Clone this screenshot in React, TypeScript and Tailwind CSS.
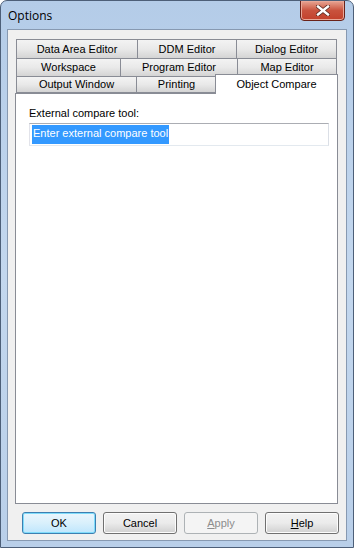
import React from "react";

const ui = { fontFamily: '"Liberation Sans", Arial, sans-serif' };

type Tab = { label: string; w: number };

const rows: Tab[][] = [
  [
    { label: "Data Area Editor", w: 122 },
    { label: "DDM Editor", w: 100 },
    { label: "Dialog Editor", w: 101 },
  ],
  [
    { label: "Workspace", w: 105 },
    { label: "Program Editor", w: 118 },
    { label: "Map Editor", w: 100 },
  ],
];

function TabButton({ tab, first, h }: { tab: Tab; first: boolean; h: string }) {
  return (
    <div
      className={`${h} ${first ? "" : "-ml-px"} flex items-center justify-center border border-[#898c95] bg-gradient-to-b from-[#f3f3f3] via-[#e9e9e9] to-[#d4d4d4] text-[11px] text-black`}
      style={{ width: tab.w }}
    >
      {tab.label}
    </div>
  );
}

function Button({
  children,
  variant = "normal",
}: {
  children: React.ReactNode;
  variant?: "normal" | "default" | "disabled";
}) {
  const cls =
    variant === "default"
      ? "border-[#3c7fb1] shadow-[inset_0_0_0_1px_#7fdcfb] bg-gradient-to-b from-[#eaf6fd] via-[#d9f0fc] to-[#bee6fd] text-black"
      : variant === "disabled"
      ? "border-[#adb2b5] bg-[#f4f4f4] text-[#8d8d8d]"
      : "border-[#707070] shadow-[inset_0_0_0_1px_#fcfcfc] bg-gradient-to-b from-[#f2f2f2] via-[#ebebeb] to-[#d0d0d0] text-black";
  return (
    <div
      className={`w-[74px] h-[22px] rounded-[3px] border flex items-center justify-center text-[11px] ${cls}`}
    >
      {children}
    </div>
  );
}

export default function App() {
  return (
    <div
      className="w-[354px] h-[548px] flex flex-col rounded-t-[7px] border border-[#4d5f78] bg-gradient-to-b from-[#b4cce8] via-[#c3d7ee] to-[#b9cfe9] overflow-hidden"
      style={ui}
    >
      {/* title bar */}
      <div className="h-[28px] flex items-start justify-between pl-[7px] pr-[8px]">
        <div
          className="mt-[6px] text-[12px] text-black"
          style={{ fontFamily: '"Open Sans", "Noto Sans", sans-serif' }}
        >
          Options
        </div>
        <div className="-mt-px w-[45px] h-[21px] rounded-b-[4px] border border-[#6a2219] bg-gradient-to-b from-[#e7a594] via-[#c9523d] to-[#c2402b] shadow-[inset_0_0_0_1px_#e9a898] flex items-center justify-center">
          <svg width="14" height="11" viewBox="0 0 14 11">
            <path
              d="M2 1.5 L12 9.5 M12 1.5 L2 9.5"
              stroke="#5a2a22"
              strokeWidth="4"
              strokeLinecap="square"
            />
            <path
              d="M2 1.5 L12 9.5 M12 1.5 L2 9.5"
              stroke="#ffffff"
              strokeWidth="2.4"
              strokeLinecap="square"
            />
          </svg>
        </div>
      </div>

      {/* client area */}
      <div className="mx-[6px] h-[512px] border border-[#8799b1] bg-[#f0f0f0] flex flex-col pt-[9px] pl-[7px]">
        <div className="flex flex-col w-[323px]">
          {rows.map((row, i) => (
            <div key={i} className={`flex pl-px ${i > 0 ? "-mt-px" : ""}`}>
              {row.map((t, j) => (
                <TabButton key={t.label} tab={t} first={j === 0} h={i === 0 ? "h-[20px]" : "h-[19px]"} />
              ))}
            </div>
          ))}
          <div className="-mt-px h-[17px] flex items-end pl-px">
            <TabButton tab={{ label: "Output Window", w: 121 }} first h="h-[17px]" />
            <TabButton tab={{ label: "Printing", w: 81 }} first={false} h="h-[17px]" />
            <div className="relative z-10 -ml-[2px] -mb-px w-[123px] h-[20px] border border-b-0 border-[#898c95] bg-white flex items-start justify-center pt-px text-[11px] text-black">
              Object Compare
            </div>
          </div>
          <div className="h-[411px] border border-[#898c95] bg-white flex flex-col pt-[13px] pl-[13px]">
            <div className="text-[11px] leading-[13px] text-black">External compare tool:</div>
            <div className="mt-[3px] w-[300px] h-[23px] border border-[#abadb3] border-b-[#e3e9ef] border-r-[#dbdfe6] border-l-[#e2e3ea] p-[1px] pl-[2px] flex">
              <span className="bg-[#3399ff] text-white text-[11px] leading-[17px] px-px">
                Enter external compare tool
              </span>
            </div>
          </div>
        </div>

        <div className="mt-[8px] ml-[7px] flex gap-[7px]">
          <Button variant="default">OK</Button>
          <Button>Cancel</Button>
          <Button variant="disabled">
            <span>
              <span className="underline">A</span>pply
            </span>
          </Button>
          <Button>
            <span>
              <span className="underline">H</span>elp
            </span>
          </Button>
        </div>
      </div>
    </div>
  );
}
